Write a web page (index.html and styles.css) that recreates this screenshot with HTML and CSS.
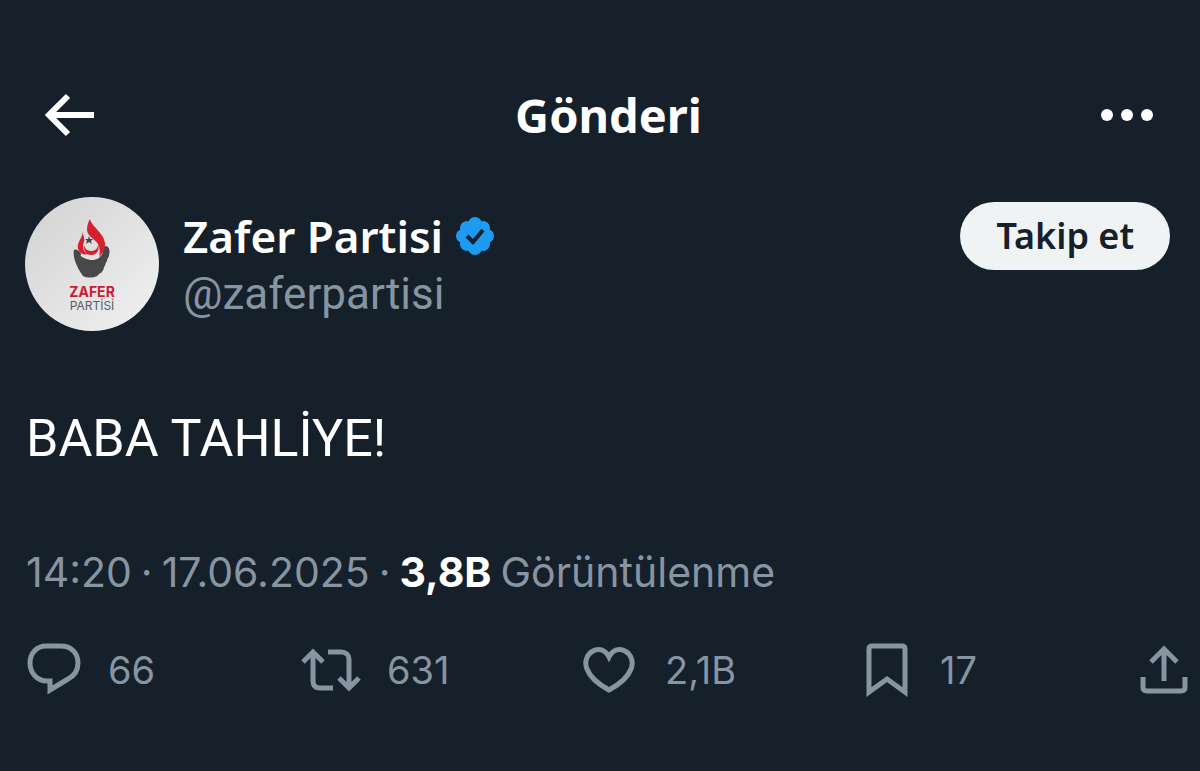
FILE: index.html
```html
<!DOCTYPE html>
<html lang="tr">
<head>
	<meta charset="utf-8">
	<meta name="viewport" content="width=device-width, initial-scale=1">
	<title>Gönderi</title>
	<link rel="stylesheet" href="styles.css">
</head>
<body>
	<header class="topbar">
		<a class="back" href="#" aria-label="Geri">
			<svg width="52" height="44" viewBox="0 0 52 44"><path d="M24 3L5 22l19 19M4 22h46" fill="none" stroke="#fff" stroke-width="6"/></svg>
		</a>
		<h1>Gönderi</h1>
		<button class="more" type="button" aria-label="Daha fazla">
			<svg width="52" height="12" viewBox="0 0 52 12" fill="#fff"><circle cx="6" cy="6" r="6"/><circle cx="26" cy="6" r="6"/><circle cx="46" cy="6" r="6"/></svg>
		</button>
	</header>

	<main class="post">
		<div class="author">
			<svg class="avatar" viewBox="0 0 134 134" role="img" aria-label="Zafer Partisi">
				<defs>
					<linearGradient id="disc" x1="0" y1="0" x2="1" y2="1">
						<stop offset="0" stop-color="#d2d2d3"/>
						<stop offset=".45" stop-color="#e0e0e1"/>
						<stop offset="1" stop-color="#f2f2f3"/>
					</linearGradient>
				</defs>
				<circle cx="67" cy="67" r="67" fill="url(#disc)"/>
				<!-- hand -->
				<path d="M49 53c2-1 4 0 6 2 2 5 6 8 12 8 6 0 9-3 11-8-1-3 0-6 3-6 4 1 4 6 3 9 0 3-2 3-2 6-2 2-1 4-3 6 0 3-2 4-3 6-2 0-2 2-4 3-4 2-10 2-14 0-3-4-6-9-8-15-1-4-2-8-1-11z" fill="#48484b"/>
				<!-- flame -->
				<path d="M65 22c1 7 15 15 15 25 0 6-3 10-6 13 1-5 1-9-1-13-3-5-10-7-11-14 0-4 1-8 3-11z" fill="#d8202c"/>
				<path d="M58 35c0 4 2 6 1 10-2 5-1 10 4 12-4 1-7 0-9-3-4-7 3-12 4-19z" fill="#d8202c"/>
				<path d="M59 47c0 4 3 7 7 7s7-2 7-7c2 6-1 11-7 11-5 0-8-5-7-11z" fill="#d8202c"/>
				<path d="M56 58c5 4 13 4 18 0" fill="none" stroke="#e0e0e1" stroke-width="2"/>
				<path d="M64 39l1 3h3l-2 2 1 3-3-2-3 2 1-3-2-2h3z" fill="#48484b"/>
				<text class="logo-name" x="67" y="100">ZAFER</text>
				<text class="logo-sub" x="67" y="113">PARTİSİ</text>
			</svg>
			<div class="names">
				<div class="name">
					<a href="#">Zafer Partisi</a>
					<svg width="40" height="40" viewBox="0 0 40 40" role="img" aria-label="Onaylanmış hesap">
						<g fill="#1d9bf0"><circle cx="20" cy="20" r="15"/><circle cx="20" cy="8" r="7"/><circle cx="28" cy="12" r="7"/><circle cx="32" cy="20" r="7"/><circle cx="28" cy="28" r="7"/><circle cx="20" cy="32" r="7"/><circle cx="12" cy="28" r="7"/><circle cx="8" cy="20" r="7"/><circle cx="12" cy="12" r="7"/></g>
						<path d="M12 20l6 6L28 14" fill="none" stroke="#16202a" stroke-width="4"/>
					</svg>
				</div>
				<div class="handle">@zaferpartisi</div>
			</div>
			<button class="follow" type="button">Takip et</button>
		</div>

		<p class="text">BABA TAHLİYE!</p>

		<p class="meta">
			<span>14:20</span>
			<span>·</span>
			<span>17.06.2025</span>
			<span>·</span>
			<strong>3,8B</strong>
			<span>Görüntülenme</span>
		</p>

		<div class="actions">
			<button type="button" aria-label="Yanıtla">
				<svg width="56" height="56" viewBox="0 0 56 56"><path d="M20 4h15c10 0 17 7 17 17 0 8-4 13-10 16L24 48V39h-3C11 39 4 31 4 21S11 4 20 4z"/></svg>
				<span>66</span>
			</button>
			<button type="button" aria-label="Yeniden gönder">
				<svg width="60" height="56" viewBox="0 0 60 56"><path d="M2 20L12 10l10 10M12 9v30c0 5 3 7 7 7h13M27 10h13c5 0 8 3 8 7v30M38 36l10 10 10-10"/></svg>
				<span>631</span>
			</button>
			<button type="button" aria-label="Beğen">
				<svg width="56" height="56" viewBox="0 0 56 56"><path d="M26 15C22 7 15 6 10 9 4 12 1 20 4 27c3 8 11 15 22 21 11-6 19-13 22-21 3-7 0-15-6-18-5-3-12-2-16 6z"/></svg>
				<span>2,1B</span>
			</button>
			<button type="button" aria-label="Yer işareti">
				<svg width="52" height="56" viewBox="0 0 52 56"><path d="M7 50V7q0-3 3-3h30q3 0 3 3v43L25 37z"/></svg>
				<span>17</span>
			</button>
			<button type="button" aria-label="Paylaş">
				<svg width="48" height="56" viewBox="0 0 48 56"><path d="M11 20L24 7l13 13M24 6v33M3 35v10q0 4 4 4h34q4 0 4-4V35"/></svg>
			</button>
		</div>
	</main>
</body>
</html>
```
FILE: styles.css
```css
* { box-sizing: border-box; }
body {
	margin: 0;
	background: #16202a;
	color: #fff;
	font-family: "Roboto", "Liberation Sans", sans-serif;
}
a { color: inherit; text-decoration: none; }
button {
	border: 0;
	padding: 0;
	background: none;
	color: inherit;
	font: inherit;
	cursor: pointer;
}
svg { display: block; flex: none; }
h1, p { margin: 0; }

.topbar {
	display: grid;
	grid-template-columns: 80px 1fr 60px;
	align-items: center;
	padding: 80px 47px 0 44px;
}
.topbar h1 {
	font: 700 47px/70px "Noto Sans", sans-serif;
	text-align: center;
}
.more { justify-self: end; }

.author {
	display: flex;
	align-items: flex-start;
	padding: 47px 30px 0 25px;
}
.avatar { width: 134px; height: 134px; }
.logo-name, .logo-sub {
	font-family: "Inter", sans-serif;
	text-anchor: middle;
}
.logo-name { font-size: 14px; font-weight: 700; fill: #c8202f; }
.logo-sub { font-size: 12px; fill: #5c5c60; }
.names {
	flex: 1;
	padding: 11px 0 0 24px;
}
.name {
	display: flex;
	align-items: center;
	gap: 12px;
	font: 600 44px/56px "Noto Sans", sans-serif;
}
.handle {
	color: #8794a2;
	font-size: 44px;
	line-height: 60px;
}
.follow {
	margin-top: 5px;
	padding: 0 36px;
	border-radius: 34px;
	background: #eff3f4;
	color: #16202a;
	font: 600 36px/68px "Noto Sans", sans-serif;
}

.text {
	padding: 78px 26px 0;
	font-size: 52px;
	line-height: 60px;
}
.meta {
	display: flex;
	flex-wrap: wrap;
	column-gap: 9px;
	padding: 77px 26px 0;
	color: #8794a2;
	font-family: "Inter", sans-serif;
	font-size: 41px;
	line-height: 52px;
}
.meta strong { color: #fff; }

.actions {
	display: grid;
	grid-template-columns: 275fr 282fr 279fr 278fr auto;
	padding: 44px 12px 0 26px;
	color: #8794a2;
	font-family: "Inter", sans-serif;
	font-size: 38px;
	line-height: 56px;
}
.actions button {
	display: flex;
	align-items: center;
	gap: 26px;
}
.actions path {
	fill: none;
	stroke: #8794a2;
	stroke-width: 5;
}
```
